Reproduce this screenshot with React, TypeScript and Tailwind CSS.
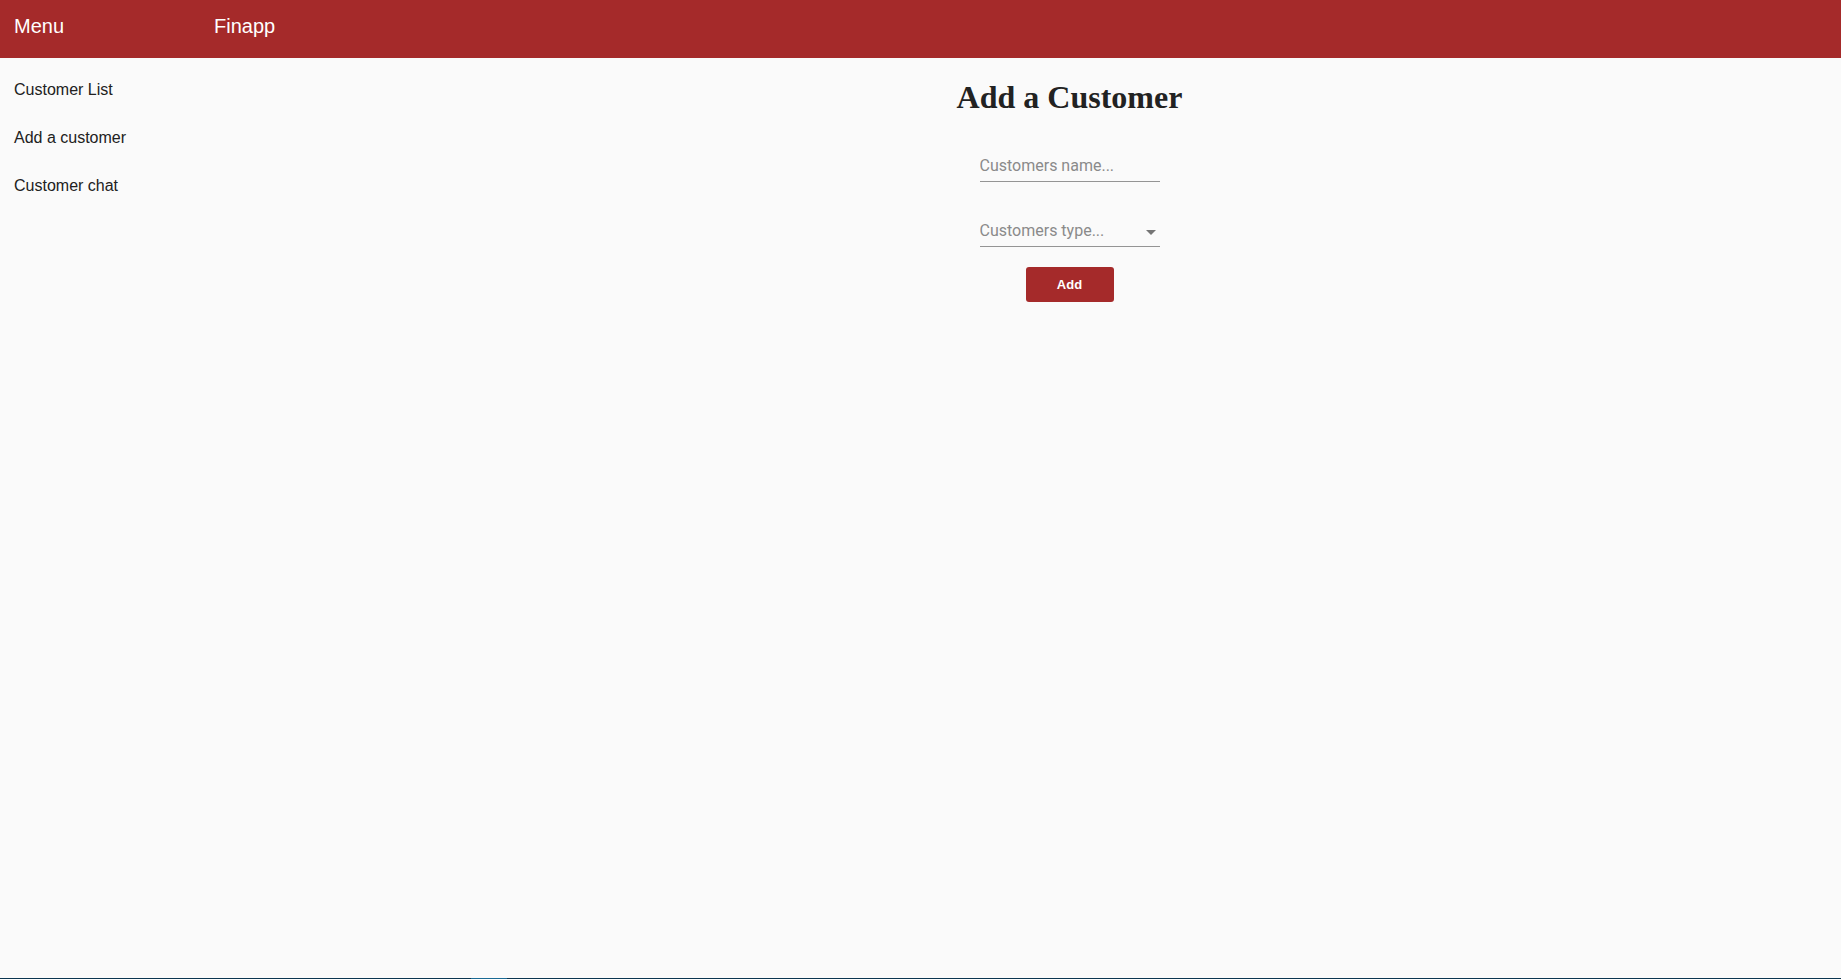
import { useState } from "react";

const NAV = ["Customer List", "Add a customer", "Customer chat"];

export default function App() {
  const [name, setName] = useState("");
  const [type, setType] = useState("");

  return (
    <div className="flex min-h-screen flex-col bg-[#fafafa] font-['Liberation_Sans',Arial,sans-serif]">
      {/* App bar */}
      <header className="flex h-[58px] shrink-0 items-start bg-[#a52a2a] pt-[15px] text-[20px] leading-[23px] text-white">
        <div className="w-[214px] pl-[14px]">Menu</div>
        <div>Finapp</div>
      </header>

      <div className="flex flex-1">
        {/* Side nav */}
        <nav className="w-[298px] shrink-0 pt-[8px]">
          {NAV.map((item) => (
            <div
              key={item}
              className="flex h-[48px] items-center pl-[14px] text-[16px] text-[#212121]"
            >
              {item}
            </div>
          ))}
        </nav>

        {/* Form */}
        <main className="flex flex-1 flex-col items-center">
          <h1 className="mt-[21px] text-[32px] font-bold leading-[36px] text-[#222] font-['Liberation_Serif','Times_New_Roman',serif]">
            Add a Customer
          </h1>

          <div className="mt-[35px] flex w-[180px] flex-col font-['Roboto',sans-serif] text-[16px]">
            <input
              value={name}
              onChange={(e) => setName(e.target.value)}
              placeholder="Customers name..."
              className="h-[32px] border-b border-[#949494] bg-transparent pt-[6px] pb-[7px] leading-[19px] text-[#222] outline-none placeholder:text-[#8a8a8a]"
            />

            <div className="relative mt-[31px] border-b border-[#949494]">
              <select
                value={type}
                onChange={(e) => setType(e.target.value)}
                className="h-[33px] w-full appearance-none bg-transparent pt-[8px] pb-[6px] leading-[19px] text-[#8a8a8a] outline-none"
              >
                <option value="" disabled>
                  Customers type...
                </option>
                <option value="private">Private</option>
                <option value="business">Business</option>
              </select>
              <svg
                viewBox="0 0 24 24"
                className="pointer-events-none absolute right-[-3px] top-[7px] h-6 w-6 fill-[#757575]"
              >
                <path d="M7 10l5 5 5-5z" />
              </svg>
            </div>

            <button
              type="button"
              className="mx-auto mt-[20px] h-[35px] w-[88px] rounded-[3px] bg-[#a52a2a] text-[13px] font-bold text-white font-['Liberation_Sans',Arial,sans-serif]"
            >
              Add
            </button>
          </div>
        </main>
      </div>

      {/* Window edge */}
      <div className="flex h-px shrink-0 bg-[#0b3550]">
        <div className="ml-[471px] w-[36px] bg-[#1a6a94]" />
      </div>
    </div>
  );
}
